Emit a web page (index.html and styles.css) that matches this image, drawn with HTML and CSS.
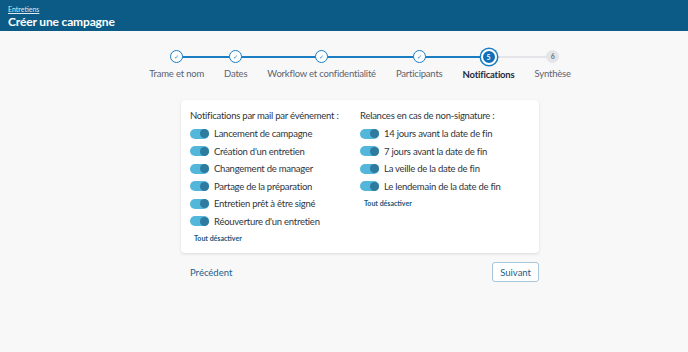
FILE: index.html
```html
<!DOCTYPE html>
<html lang="fr">
<head>
  <meta charset="UTF-8">
  <title>Créer une campagne</title>
  <link rel="stylesheet" href="styles.css">
</head>
<body>
  <header class="topbar">
    <a class="crumb" href="#">Entretiens</a>
    <h1>Créer une campagne</h1>
  </header>
  <div class="page">
    <div class="main">
      <ol class="stepper">
        <li class="step done"><span class="dot">&#10003;</span><span class="label">Trame et nom</span></li>
        <li class="step done"><span class="dot">&#10003;</span><span class="label">Dates</span></li>
        <li class="step done"><span class="dot">&#10003;</span><span class="label">Workflow et confidentialité</span></li>
        <li class="step done"><span class="dot">&#10003;</span><span class="label">Participants</span></li>
        <li class="step current"><span class="dot">5</span><span class="label">Notifications</span></li>
        <li class="step todo"><span class="dot">6</span><span class="label">Synthèse</span></li>
      </ol>
      <div class="card">
        <div class="col">
          <div class="col-title">Notifications par mail par événement :</div>
          <label class="toggle-row"><span class="toggle"></span>Lancement de campagne</label>
          <label class="toggle-row"><span class="toggle"></span>Création d'un entretien</label>
          <label class="toggle-row"><span class="toggle"></span>Changement de manager</label>
          <label class="toggle-row"><span class="toggle"></span>Partage de la préparation</label>
          <label class="toggle-row"><span class="toggle"></span>Entretien prêt à être signé</label>
          <label class="toggle-row"><span class="toggle"></span>Réouverture d'un entretien</label>
          <a class="off-all" href="#">Tout désactiver</a>
        </div>
        <div class="col">
          <div class="col-title">Relances en cas de non-signature :</div>
          <label class="toggle-row"><span class="toggle"></span>14 jours avant la date de fin</label>
          <label class="toggle-row"><span class="toggle"></span>7 jours avant la date de fin</label>
          <label class="toggle-row"><span class="toggle"></span>La veille de la date de fin</label>
          <label class="toggle-row"><span class="toggle"></span>Le lendemain de la date de fin</label>
          <a class="off-all" href="#">Tout désactiver</a>
        </div>
      </div>
      <div class="actions">
        <a class="prev" href="#">Précédent</a>
        <button class="next">Suivant</button>
      </div>
    </div>
  </div>
</body>
</html>
```

FILE: styles.css
```css
body {
  margin: 0;
  font-family: 'Lato', sans-serif;
  background-color: #f8f8f9;
  color: #2f3540;
}
.topbar {
  background-color: #0b5b86;
  color: white;
  padding: 4px 8px 3px;
  height: 24px;
}
.crumb {
  display: block;
  color: #dfe9f0;
  font-size: 7px;
  line-height: 10px;
}
.topbar h1 {
  margin: 0;
  font-size: 12px;
  line-height: 15px;
  font-weight: 700;
  letter-spacing: -0.15px;
}
.page {
  padding-left: 32px;
}
.main {
  width: 358px;
  margin: 0 auto;
}
.stepper {
  list-style: none;
  margin: 19px 0 0;
  padding: 0;
  display: flex;
  justify-content: center;
  gap: 20px;
}
.step {
  position: relative;
  display: flex;
  flex-direction: column;
  align-items: center;
}
.step::before, .step::after {
  content: "";
  position: absolute;
  top: 6px;
  height: 2px;
  background: #1b7ec2;
}
.step::before {
  left: -10px;
  right: 50%;
}
.step::after {
  left: 50%;
  right: -10px;
}
.step:first-child::before, .step:last-child::after {
  display: none;
}
.step.current::after, .step.todo::before, .step.todo::after {
  background: #e4e5e9;
}
.dot {
  position: relative;
  z-index: 1;
  width: 11px;
  height: 11px;
  border: 1.5px solid #1b7ec2;
  border-radius: 50%;
  background: white;
  color: #1b7ec2;
  font-size: 6px;
  line-height: 11px;
  text-align: center;
}
.current .dot {
  width: 12px;
  height: 12px;
  margin-top: -1px;
  background: #0f70b8;
  border: 2px solid white;
  box-shadow: 0 0 0 1.5px #1b7ec2;
  color: white;
  font-weight: 700;
  font-size: 7px;
  line-height: 12px;
}
.todo .dot {
  border-color: #e4e5e9;
  background: #e4e5e9;
  color: #6d7380;
  font-size: 7px;
  font-weight: 700;
}
.label {
  margin-top: 5px;
  font-size: 9.5px;
  letter-spacing: -0.2px;
  color: #5d636e;
  white-space: nowrap;
}
.current .label {
  margin-top: 4px;
  font-weight: 700;
  color: #1f2a3a;
}
.card {
  margin-top: 20px;
  background: white;
  border-radius: 4px;
  box-shadow: 0 1px 3px rgba(0,0,0,0.12);
  display: grid;
  grid-template-columns: 170px 1fr;
  padding: 8px 0 11px 9px;
}
.col {
  display: flex;
  flex-direction: column;
  align-items: flex-start;
}
.col-title {
  font-size: 9.5px;
  letter-spacing: -0.25px;
  line-height: 16px;
  margin-bottom: 1px;
}
.toggle-row {
  display: flex;
  align-items: center;
  gap: 5px;
  font-size: 9.5px;
  letter-spacing: -0.25px;
  line-height: 17.5px;
}
.toggle {
  position: relative;
  width: 19px;
  height: 10px;
  border-radius: 5px;
  background: #52b7da;
}
.toggle::after {
  content: "";
  position: absolute;
  right: 0.5px;
  top: 0.5px;
  width: 9px;
  height: 9px;
  border-radius: 50%;
  background: #2f7b9f;
}
.off-all {
  margin: 4px 0 0 4px;
  font-size: 7px;
  font-weight: 700;
  color: #1b5678;
  text-decoration: none;
}
.actions {
  margin-top: 9px;
  display: flex;
  justify-content: space-between;
  align-items: center;
  padding-left: 9px;
}
.prev {
  font-size: 9.5px;
  color: #1b5e8a;
  text-decoration: none;
}
.next {
  font-family: inherit;
  font-size: 9.5px;
  color: #1b5e8a;
  background: white;
  border: 1px solid #a6c6dc;
  border-radius: 3px;
  padding: 3px 7px;
  height: 20px;
}
```
